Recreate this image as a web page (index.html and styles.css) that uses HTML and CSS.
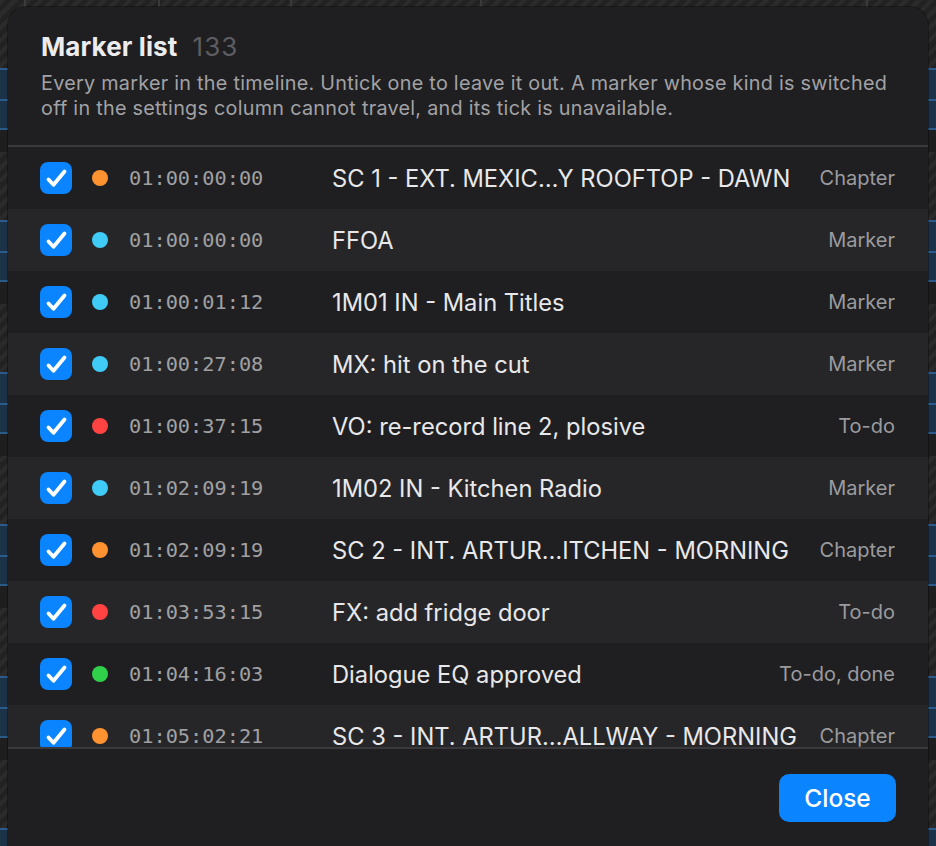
FILE: index.html
```html
<!DOCTYPE html>
<html lang="en">
<head>
<meta charset="utf-8">
<title>Marker list</title>
<link rel="stylesheet" href="styles.css">
</head>
<body>
<div class="stage">
  <div class="dialog">
    <header class="head">
      <h1 class="title">Marker list <span class="count">133</span></h1>
      <p class="desc">Every marker in the timeline. Untick one to leave it out. A marker whose kind is switched off in the settings column cannot travel, and its tick is unavailable.</p>
    </header>
    <div class="list">
      <div class="row"><span class="check"><svg viewBox="0 0 32 32"><path d="M8.5 17.5 L13.5 22.8 L24.5 9.5"/></svg></span><span class="dot orange"></span><span class="tc">01:00:00:00</span><span class="name">SC 1 - EXT. MEXIC…Y ROOFTOP - DAWN</span><span class="kind">Chapter</span></div>
      <div class="row"><span class="check"><svg viewBox="0 0 32 32"><path d="M8.5 17.5 L13.5 22.8 L24.5 9.5"/></svg></span><span class="dot cyan"></span><span class="tc">01:00:00:00</span><span class="name">FFOA</span><span class="kind">Marker</span></div>
      <div class="row"><span class="check"><svg viewBox="0 0 32 32"><path d="M8.5 17.5 L13.5 22.8 L24.5 9.5"/></svg></span><span class="dot cyan"></span><span class="tc">01:00:01:12</span><span class="name">1M01 IN - Main Titles</span><span class="kind">Marker</span></div>
      <div class="row"><span class="check"><svg viewBox="0 0 32 32"><path d="M8.5 17.5 L13.5 22.8 L24.5 9.5"/></svg></span><span class="dot cyan"></span><span class="tc">01:00:27:08</span><span class="name">MX: hit on the cut</span><span class="kind">Marker</span></div>
      <div class="row"><span class="check"><svg viewBox="0 0 32 32"><path d="M8.5 17.5 L13.5 22.8 L24.5 9.5"/></svg></span><span class="dot red"></span><span class="tc">01:00:37:15</span><span class="name">VO: re-record line 2, plosive</span><span class="kind">To-do</span></div>
      <div class="row"><span class="check"><svg viewBox="0 0 32 32"><path d="M8.5 17.5 L13.5 22.8 L24.5 9.5"/></svg></span><span class="dot cyan"></span><span class="tc">01:02:09:19</span><span class="name">1M02 IN - Kitchen Radio</span><span class="kind">Marker</span></div>
      <div class="row"><span class="check"><svg viewBox="0 0 32 32"><path d="M8.5 17.5 L13.5 22.8 L24.5 9.5"/></svg></span><span class="dot orange"></span><span class="tc">01:02:09:19</span><span class="name">SC 2 - INT. ARTUR…ITCHEN - MORNING</span><span class="kind">Chapter</span></div>
      <div class="row"><span class="check"><svg viewBox="0 0 32 32"><path d="M8.5 17.5 L13.5 22.8 L24.5 9.5"/></svg></span><span class="dot red"></span><span class="tc">01:03:53:15</span><span class="name">FX: add fridge door</span><span class="kind">To-do</span></div>
      <div class="row"><span class="check"><svg viewBox="0 0 32 32"><path d="M8.5 17.5 L13.5 22.8 L24.5 9.5"/></svg></span><span class="dot green"></span><span class="tc">01:04:16:03</span><span class="name">Dialogue EQ approved</span><span class="kind">To-do, done</span></div>
      <div class="row"><span class="check"><svg viewBox="0 0 32 32"><path d="M8.5 17.5 L13.5 22.8 L24.5 9.5"/></svg></span><span class="dot orange"></span><span class="tc">01:05:02:21</span><span class="name">SC 3 - INT. ARTUR…ALLWAY - MORNING</span><span class="kind">Chapter</span></div>
    </div>
    <footer class="foot">
      <button class="close" type="button">Close</button>
    </footer>
  </div>
</div>
</body>
</html>
```

FILE: styles.css
```css
html, body {
  margin: 0;
  padding: 0;
  height: 100%;
  overflow: hidden;
}

body {
  font-family: Inter, "Noto Sans", "Liberation Sans", sans-serif;
  background-color: #1f1f1f;
  background-image:
    repeating-linear-gradient(to bottom, transparent 0 68px, #2a5b8c 68px 70px, #1c3249 70px 99px, #2a5b8c 99px 101px, #1c3249 101px 128px, #2a5b8c 128px 130px, #1e1e1e 130px 152px),
    repeating-linear-gradient(to bottom, transparent 0 68px, #2a5b8c 68px 70px, #1c3249 70px 99px, #2a5b8c 99px 101px, #1c3249 101px 128px, #2a5b8c 128px 130px, #1e1e1e 130px 152px),
    linear-gradient(to right, transparent 0 24px, #3a3a3a 24px 26px, transparent 26px 158px, #3a3a3a 158px 160px, transparent 160px 290px, #3a3a3a 290px 292px, transparent 292px 480px, #3a3a3a 480px 482px, transparent 482px 866px, #3a3a3a 866px 868px, transparent 868px),
    repeating-linear-gradient(135deg, #2b2b2b 0 4px, #222222 4px 9px);
  background-size: 8px 100%, 8px 100%, 100% 30px, auto;
  background-position: left top, right top, left top, left top;
  background-repeat: repeat-y, repeat-y, no-repeat, repeat;
}

.stage {
  padding: 7px 8px 0 8px;
}

.dialog {
  background: #1f1f21;
  border-radius: 18px;
  height: 880px;
  overflow: hidden;
  display: flex;
  flex-direction: column;
  box-shadow: 0 0 0 1px rgba(0, 0, 0, 0.35);
}

.head {
  padding: 25px 30px 0 33px;
  height: 140px;
  box-sizing: border-box;
  border-bottom: 2px solid #39393b;
  flex: none;
}

.title {
  margin: 0;
  font-size: 26px;
  font-weight: 700;
  color: #ececee;
  line-height: 30px;
  letter-spacing: 0.1px;
}

.count {
  font-weight: 400;
  color: #5d5d61;
  margin-left: 9px;
  letter-spacing: 1px;
}

.desc {
  margin: 9px 0 0 0;
  font-size: 19.8px;
  line-height: 25px;
  letter-spacing: 0.27px;
  color: #a2a2a6;
}

.list {
  height: 600px;
  overflow: hidden;
  border-bottom: 2px solid #3a3a3c;
  flex: none;
}

.row {
  height: 62px;
  display: flex;
  align-items: center;
  padding: 0 33px 0 32px;
}

.row:nth-child(even) {
  background: #262628;
}

.check {
  width: 32px;
  height: 32px;
  border-radius: 8px;
  background: #0a84ff;
  display: flex;
  flex: none;
}

.check svg {
  width: 32px;
  height: 32px;
  fill: none;
  stroke: #ffffff;
  stroke-width: 3.8;
  stroke-linecap: round;
  stroke-linejoin: round;
}

.dot {
  width: 16px;
  height: 16px;
  border-radius: 50%;
  margin-left: 20px;
  flex: none;
}

.orange { background: #ff9230; }
.cyan { background: #3fcbf5; }
.red { background: #ff4343; }
.green { background: #30d04b; }

.tc {
  font-family: "DejaVu Sans Mono", "Liberation Mono", monospace;
  font-size: 20.3px;
  color: #a0a0a3;
  margin-left: 21px;
  width: 203px;
  flex: none;
}

.name {
  flex: 1;
  font-size: 23.7px;
  color: #e8e8ea;
  white-space: nowrap;
  overflow: hidden;
}

.kind {
  font-size: 20px;
  color: #9b9b9f;
  margin-left: 16px;
  white-space: nowrap;
}

.foot {
  display: flex;
  justify-content: flex-end;
  padding: 25px 32px 0 32px;
}

.close {
  width: 117px;
  height: 48px;
  border: none;
  border-radius: 10px;
  background: #0a84ff;
  color: #ffffff;
  font-family: Inter, "Noto Sans", "Liberation Sans", sans-serif;
  font-size: 24.5px;
  font-weight: 500;
  padding: 0;
}
```
